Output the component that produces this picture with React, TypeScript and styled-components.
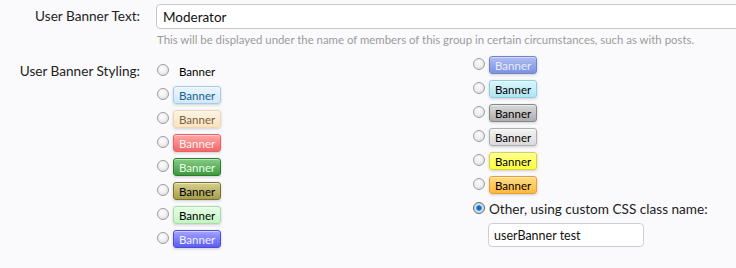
import styled, { createGlobalStyle } from "styled-components";

type Tone = {
  top: string;
  bottom: string;
  border: string;
  text: string;
};

const tones: Record<string, Tone> = {
  lightBlue: { top: "#eaf5fd", bottom: "#d2e8f8", border: "#a6cbe4", text: "#17608f" },
  peach: { top: "#fdf4e4", bottom: "#f8e2c2", border: "#f0d6ae", text: "#7d5f3c" },
  red: { top: "#ffa8a8", bottom: "#f26868", border: "#ee6060", text: "#fff2f2" },
  green: { top: "#86cc86", bottom: "#3e9a3e", border: "#2e7c2e", text: "#eaffea" },
  olive: { top: "#d6d08e", bottom: "#a69e4e", border: "#7a742e", text: "#000" },
  lightGreen: { top: "#e6fee6", bottom: "#c4f4c4", border: "#a6dea6", text: "#000" },
  blue: { top: "#a4a4ff", bottom: "#5c5cf4", border: "#4c4cdc", text: "#f2f2ff" },
  steel: { top: "#b0bdf2", bottom: "#7d93df", border: "#6e84cf", text: "#e8ecff" },
  cyan: { top: "#daf6fd", bottom: "#b0e4f3", border: "#8ccfe4", text: "#000" },
  gray: { top: "#dadada", bottom: "#adadad", border: "#888", text: "#000" },
  silver: { top: "#f3f3f3", bottom: "#dadada", border: "#aeaeae", text: "#000" },
  yellow: { top: "#ffff90", bottom: "#ffff3c", border: "#d6d62e", text: "#000" },
  orange: { top: "#ffdc88", bottom: "#ffb93c", border: "#e6a030", text: "#000" },
};

const leftColumn = ["plain", "lightBlue", "peach", "red", "green", "olive", "lightGreen", "blue"];
const rightColumn = ["steel", "cyan", "gray", "silver", "yellow", "orange"];

export default function App() {
  return (
    <>
      <GlobalStyle />
      <Page>
        <FormRow>
          <Label>User Banner Text:</Label>
          <Field>
            <WideInput defaultValue="Moderator" />
            <Hint>
              This will be displayed under the name of members of this group in certain
              circumstances, such as with posts.
            </Hint>
          </Field>
        </FormRow>
        <StylingRow>
          <Label $offset={6}>User Banner Styling:</Label>
          <Choices>
            <Column $offset={6}>
              {leftColumn.map((tone) => (
                <Choice key={tone}>
                  <Radio type="radio" name="banner" />
                  {tone === "plain" ? <Plain>Banner</Plain> : <Banner $tone={tones[tone]}>Banner</Banner>}
                </Choice>
              ))}
            </Column>
            <Column>
              {rightColumn.map((tone) => (
                <Choice key={tone}>
                  <Radio type="radio" name="banner" />
                  <Banner $tone={tones[tone]}>Banner</Banner>
                </Choice>
              ))}
              <Choice>
                <Radio type="radio" name="banner" defaultChecked />
                <OtherText>Other, using custom CSS class name:</OtherText>
              </Choice>
              <ClassInput defaultValue="userBanner test" />
            </Column>
          </Choices>
        </StylingRow>
      </Page>
    </>
  );
}

const GlobalStyle = createGlobalStyle`
  html, body {
    margin: 0;
    background: #fafafc;
    overflow: hidden;
  }
  body {
    font-family: Lato, "Liberation Sans", sans-serif;
    color: #1e1e1e;
  }
`;

const Page = styled.div`
  width: 736px;
  height: 268px;
  padding-top: 4px;
  box-sizing: border-box;
  overflow: hidden;
`;

const FormRow = styled.div`
  display: grid;
  grid-template-columns: 140px 1fr;
  column-gap: 16px;
`;

const StylingRow = styled(FormRow)`
  margin-top: 6px;
`;

const Label = styled.div<{ $offset?: number }>`
  text-align: right;
  font-size: 13.6px;
  line-height: 24px;
  padding-top: ${(p) => p.$offset ?? 0}px;
  color: #222;
`;

const Field = styled.div`
  display: flex;
  flex-direction: column;
`;

const WideInput = styled.input`
  width: 640px;
  height: 25px;
  box-sizing: border-box;
  border: 1px solid #c8c8c8;
  border-radius: 4px;
  background: #fff;
  padding: 0 6px;
  font-family: inherit;
  font-size: 13.5px;
  color: #111;
  outline: none;
`;

const Hint = styled.div`
  margin-top: 4px;
  padding-left: 1px;
  font-size: 11.4px;
  line-height: 14px;
  color: #9a9a9a;
`;

const Choices = styled.div`
  display: grid;
  grid-template-columns: 316px 1fr;
`;

const Column = styled.div<{ $offset?: number }>`
  display: flex;
  flex-direction: column;
  padding-top: ${(p) => p.$offset ?? 0}px;
`;

const Choice = styled.label`
  display: flex;
  align-items: center;
  gap: 4px;
  height: 24px;
`;

const Radio = styled.input`
  appearance: none;
  margin: 0 0 2px 1px;
  width: 12px;
  height: 12px;
  border-radius: 50%;
  border: 1px solid #9e9e9e;
  background: radial-gradient(circle at 40% 35%, #fff 0%, #ececec 55%, #cfcfcf 100%);
  box-sizing: border-box;
  flex: none;

  &:checked {
    border-color: #5a6a7a;
    background: radial-gradient(circle at 50% 50%, #0b5a9e 0%, #2a86d0 35%, #d6e6f2 45%, #b9c9d6 100%);
  }
`;

const Banner = styled.span<{ $tone: Tone }>`
  display: inline-flex;
  align-items: center;
  height: 18px;
  padding: 0 5px;
  box-sizing: border-box;
  border: 1px solid ${(p) => p.$tone.border};
  border-radius: 3px;
  background: linear-gradient(to bottom, ${(p) => p.$tone.top}, ${(p) => p.$tone.bottom});
  box-shadow: inset 0 1px 0 rgba(255, 255, 255, 0.45), 0 1px 3px rgba(0, 0, 0, 0.18);
  color: ${(p) => p.$tone.text};
  font-size: 11.5px;
`;

const Plain = styled.span`
  padding: 0 6px;
  font-size: 11.5px;
  color: #000;
`;

const OtherText = styled.span`
  font-size: 13.6px;
  color: #222;
`;

const ClassInput = styled.input`
  margin: 2px 0 0 16px;
  width: 156px;
  height: 24px;
  box-sizing: border-box;
  border: 1px solid #cfcfcf;
  border-radius: 4px;
  background: #fff;
  padding: 0 5px;
  font-family: inherit;
  font-size: 12.5px;
  color: #111;
  outline: none;
`;
